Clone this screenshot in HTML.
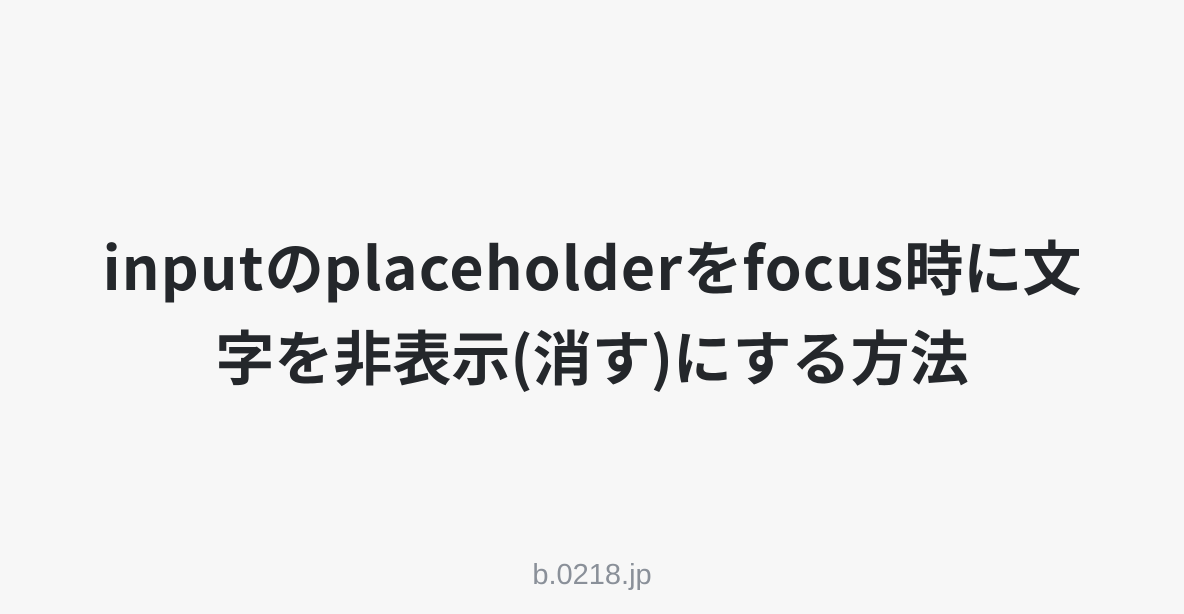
<!DOCTYPE html>
<html><head><meta charset="utf-8"><style>
html,body{margin:0;padding:0;}
body{width:1184px;height:614px;background:#f7f7f7;position:relative;overflow:hidden;}
.t{position:absolute;left:0;right:0;top:220px;text-align:center;font-family:"Noto Sans CJK JP","Liberation Sans",sans-serif;font-weight:700;font-size:59px;line-height:90px;color:#24272b;}
.l{letter-spacing:1.2px;}
.f{position:absolute;left:0;right:0;top:556px;text-align:center;font-family:"Liberation Sans",sans-serif;font-size:29px;line-height:38px;color:#8a9099;}
</style></head><body>
<div class="t"><span class="l">input</span>の<span class="l">placeholder</span>を<span class="l">focus</span>時に文<br>字を非表示(消す)にする方法</div>
<div class="f">b.0218.jp</div>
</body></html>
